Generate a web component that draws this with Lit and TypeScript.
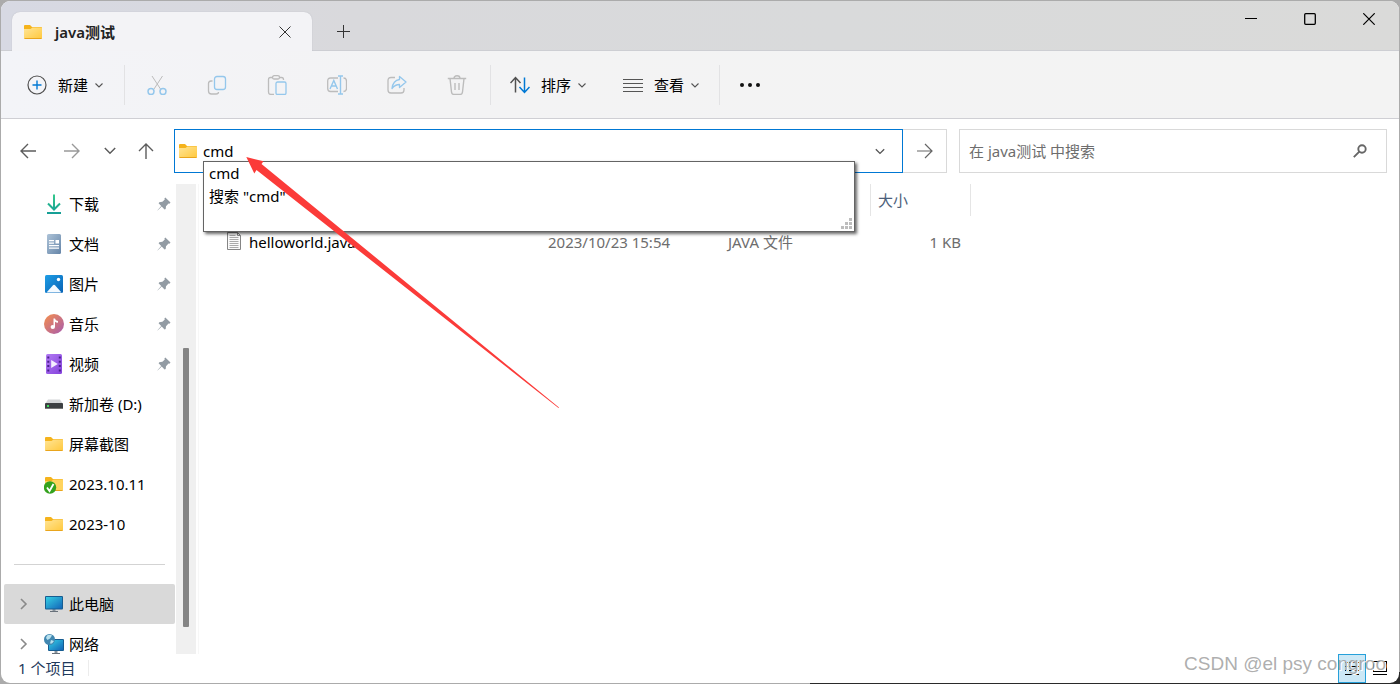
import { LitElement, html, css, svg, nothing } from "lit";
import { customElement, state } from "lit/decorators.js";

const chevronDown = html`<svg class="chev" width="10" height="10" viewBox="0 0 10 10" fill="none" stroke="#555" stroke-width="1.100"><path d="M1.500 3.500 5 7 8.500 3.500" /></svg>`;

const folder = html`<svg width="20" height="20" viewBox="0 0 20 20">
  <defs><linearGradient id="fd" x1="0" y1="0" x2="1" y2="1"><stop offset="0" stop-color="#ffe597" /><stop offset="1" stop-color="#ffc83c" /></linearGradient></defs>
  <path d="M1 4a1 1 0 0 1 1-1h5l2 2h9a1 1 0 0 1 1 1v6H1z" fill="#f5b31c" />
  <path d="M1 7h6.500l2-1.500H18a1 1 0 0 1 1 1V16a1 1 0 0 1-1 1H2a1 1 0 0 1-1-1z" fill="url(#fd)" />
  <path d="M1.500 16.500h17" stroke="#e9a51d" />
</svg>`;

const icons: Record<string, unknown> = {
  folder,
  download: html`<svg width="20" height="20" viewBox="0 0 20 20" fill="none" stroke-width="2">
    <defs><linearGradient id="dl" gradientUnits="userSpaceOnUse" x1="0" y1="0" x2="0" y2="20"><stop offset="0" stop-color="#35c98b" /><stop offset="1" stop-color="#149d96" /></linearGradient></defs>
    <path d="M10 .5V15M4 9.500l6 6 6-6M3 19h14.010" stroke="url(#dl)" />
  </svg>`,
  document: html`<svg width="20" height="20" viewBox="0 0 20 20">
    <defs><linearGradient id="dc" x1="0" y1="0" x2="1" y2="1"><stop offset="0" stop-color="#adc3d8" /><stop offset="1" stop-color="#6585a8" /></linearGradient></defs>
    <rect x="3" width="14" height="20" rx="1.500" fill="url(#dc)" />
    <path d="M5 6.700h5M5 9.200h5M5 11.700h10M5 14.200h10" stroke="#fff" stroke-width="1.300" /><rect x="11.500" y="6" width="3.500" height="3.500" fill="#fff" />
  </svg>`,
  picture: html`<svg width="20" height="20" viewBox="0 0 20 20">
    <defs><linearGradient id="pc" x1="0" y1="0" x2="1" y2="1"><stop offset="0" stop-color="#1e9ee6" /><stop offset="1" stop-color="#0862b5" /></linearGradient></defs>
    <rect x="1" y="1" width="18" height="18" rx="1.500" fill="url(#pc)" />
    <path d="M2.500 18.500 8.800 11.500q1.200-1.300 2.400 0l6.300 7z" fill="#f4faff" /><circle cx="14.500" cy="5.500" r="1.700" fill="#fff" />
  </svg>`,
  music: html`<svg width="20" height="20" viewBox="0 0 20 20">
    <defs><linearGradient id="ms" x1="0" y1="0" x2="1" y2="1"><stop offset=".1" stop-color="#ee8a55" /><stop offset="1" stop-color="#a75baf" /></linearGradient></defs>
    <circle cx="10" cy="10" r="10" fill="url(#ms)" />
    <ellipse cx="8.800" cy="13" rx="2.200" ry="2" fill="#fff" /><path d="M9.500 13V4.500h1.500q.3 2.200 3 2.500v1.800q-2 0-3-1V13z" fill="#fff" />
  </svg>`,
  video: html`<svg width="20" height="20" viewBox="0 0 20 20">
    <defs><linearGradient id="vd" x1="0" y1="0" x2="1" y2="1"><stop offset="0" stop-color="#b27bf3" /><stop offset="1" stop-color="#8542dc" /></linearGradient></defs>
    <rect x="2" width="16" height="20" rx="1.500" fill="url(#vd)" />
    <path d="M4.300 2.500V19M15.800 2.500V19" stroke="#4a1f8c" stroke-width="2" stroke-dasharray="2 2.300" />
    <path d="M7.200 6v8l6.600-4z" fill="#f5efff" />
  </svg>`,
  drive: html`<svg width="20" height="20" viewBox="0 0 20 20">
    <path d="M4 5.500h12L19 10H1z" fill="#d4d6d8" /><rect x="1" y="9" width="18" height="6" rx="1" fill="#3d4043" /><path d="M1.500 14.500h17" stroke="#777" /><rect x="3" y="11" width="2" height="2" fill="#3fdc5c" />
  </svg>`,
  synced: html`<svg width="20" height="20" viewBox="0 0 20 20">
    <path d="M1 4a1 1 0 0 1 1-1h5l2 2h9a1 1 0 0 1 1 1v6H1z" fill="#f5b31c" />
    <path d="M1 7h6.500l2-1.500H18a1 1 0 0 1 1 1V16a1 1 0 0 1-1 1H2a1 1 0 0 1-1-1z" fill="#ffd45e" /><path d="M9 16.500h9.500" stroke="#e9a51d" />
    <circle cx="6" cy="13.500" r="6.200" fill="#34a21e" /><path d="M3 13.500l2.500 3.500L9.500 10" stroke="#fff" stroke-width="1.800" fill="none" />
  </svg>`,
  computer: html`<svg width="20" height="20" viewBox="0 0 20 20">
    <defs><linearGradient id="cp" x1="0" y1="0" x2="1" y2="1"><stop offset="0" stop-color="#35cfe4" /><stop offset="1" stop-color="#1265b8" /></linearGradient></defs>
    <path d="M8.500 15h3v2h-3z" fill="#8b949c" /><path d="M6 17.500h8" stroke="#68717a" /><rect x="1" y="2" width="18" height="13.500" rx="1" fill="#175d91" /><rect x="2" y="3" width="16" height="11.500" fill="url(#cp)" />
  </svg>`,
  network: html`<svg width="20" height="20" viewBox="0 0 20 20">
    <defs><linearGradient id="nt" x1="0" y1="0" x2="1" y2="1"><stop offset="0" stop-color="#35cfe4" /><stop offset="1" stop-color="#1265b8" /></linearGradient></defs>
    <path d="M10.500 16h3v3h-3z" fill="#8b949c" /><path d="M8 19.500h8" stroke="#68717a" /><rect x="4" y="5" width="16" height="12" rx="1" fill="#175d91" /><rect x="5" y="6" width="14" height="10" fill="url(#nt)" />
    <circle cx="5.500" cy="5.500" r="5.500" fill="#4187b0" /><path d="M3 1.500q3-1.500 5 0L6 4.500 3.500 6 2 4zM7 6l3 1-2 2.500H6z" fill="#b8e1ee" />
  </svg>`,
};

const pin = html`<svg class="pin" width="14" height="14" viewBox="0 0 14 14"><path d="M8.300.5 13.500 5.600 12.400 6.700 11.500 6.500 9 9.200 8.700 12 7.500 12.500 4.700 9.600.6 13.500.5 13.300 4.200 9 1.600 6.300 2.300 5.200 5.400 4.800 7.800 2.400 7.400 1.500z" fill="#929ba3" /></svg>`;

const tools = [
  { label: "剪切", art: svg`<path d="M5 1l8.500 13M15.500 1 7 14" stroke="#bcbcbc"/><g stroke="#94c7ec" stroke-width="1.500"><circle cx="4" cy="16.500" r="3"/><circle cx="16" cy="16.500" r="3"/></g>` },
  { label: "复制", art: svg`<path d="M5.500 6H4Q1.500 6 1.500 8.500V16q0 3 3 3H9q2.500 0 2.500-2" stroke="#bcbcbc" stroke-width="1.300"/><rect x="7.500" y="1.500" width="11" height="13" rx="2.500" stroke="#94c7ec" stroke-width="1.300"/>` },
  { label: "粘贴", art: svg`<path d="M5.500 2.500h-2Q1.500 2.500 1.500 4.500V17q0 2.500 2.500 2.500h3M12.500 2.500h2q2 0 2 2V5" stroke="#bcbcbc" stroke-width="1.300"/><rect x="5.500" y=".7" width="7" height="3.300" rx="1.600" stroke="#bcbcbc" stroke-width="1.300"/><rect x="9" y="7" width="10" height="12.500" rx="1.500" stroke="#94c7ec" stroke-width="1.300"/>` },
  { label: "重命名", art: svg`<path d="M11 3H3.500Q.7 3 .7 6v7.500q0 3 2.800 3H11M16.500 3Q19.500 3 19.500 6v7.500q0 3-3 3" stroke="#bcbcbc" stroke-width="1.300"/><path d="M3 14 6.800 5.500 10.500 14M4.500 11h4.700M13.500 1.500V18.500M11 1h5M11 19h5" stroke="#94c7ec" stroke-width="1.400"/>` },
  { label: "共享", art: svg`<path d="M8 2.500H4q-3 0-3 3V15q0 3 3 3h10q3 0 3-3v-2" stroke="#bcbcbc" stroke-width="1.300"/><path d="M12.500 1.500 19 7l-6.500 5.500V9.500Q8 9.500 5 13.500 6 5.500 12.500 4.500z" stroke="#94c7ec" stroke-width="1.300" stroke-linejoin="round"/>` },
  { label: "删除", art: svg`<g stroke="#bcbcbc" stroke-width="1.400"><path d="M.8 3.500h18.400M3 3.500 4.500 17q.3 2.500 2.500 2.500h6q2.200 0 2.500-2.500L17 3.500M7 3.500Q7 .8 10 .8T13 3.500M8 8v7M12 8v7"/></g>` },
];

const quickAccess = [
  { icon: "download", name: "下载", pinned: true },
  { icon: "document", name: "文档", pinned: true },
  { icon: "picture", name: "图片", pinned: true },
  { icon: "music", name: "音乐", pinned: true },
  { icon: "video", name: "视频", pinned: true },
  { icon: "drive", name: "新加卷 (D:)", pinned: false },
  { icon: "folder", name: "屏幕截图", pinned: false },
  { icon: "synced", name: "2023.10.11", pinned: false },
  { icon: "folder", name: "2023-10", pinned: false },
];

const places = [
  { icon: "computer", name: "此电脑" },
  { icon: "network", name: "网络" },
];

@customElement("app-root")
export class AppRoot extends LitElement {
  @state() private selected = "此电脑";

  static styles = css`
    :host {
      display: flex;
      position: relative;
      box-sizing: border-box;
      height: 100vh;
      padding: 1px;
      overflow: hidden;
      background: linear-gradient(90deg, #ababab 0 810px, #2a2a2a 810px) bottom / 100% 12px no-repeat, #ababab;
      font: 15px/20px "Noto Sans", "Noto Sans CJK SC", sans-serif;
      color: #000;
    }
    * { box-sizing: border-box; }
    svg { display: block; flex: none; }
    button, input { font: inherit; color: inherit; margin: 0; border: 0; padding: 0; background: none; outline: none; }
    button { display: flex; align-items: center; justify-content: center; flex: none; }
    .window { flex: 1; min-width: 0; display: flex; flex-direction: column; border-radius: 9px; overflow: hidden; background: #fff; }
    .titlebar { display: flex; height: 50px; flex: none; padding: 0 1px 0 11px; background: linear-gradient(90deg, #d7d9e3, #d9d9dc 25%, #d9dadb 60%, #dadad9); border-bottom: 1px solid #cdced3; }
    .tab { display: flex; align-items: center; align-self: flex-end; width: 300px; height: 39px; margin-bottom: -1px; padding: 0 15px 0 11px; border-radius: 8px 8px 0 0; background: #f3f3f6; box-shadow: 0 0 1px #aaacb4; clip-path: inset(-2px -2px 0 -2px); font-weight: 600; color: #222; }
    .tab-name { flex: 1; padding-left: 12px; }
    .tab button { width: 24px; height: 24px; }
    .add { width: 62px; padding-top: 12px; }
    .caption { display: flex; margin-left: auto; height: 36px; }
    .caption button { width: 59px; }
    .toolbar { display: flex; align-items: center; height: 68px; flex: none; padding-left: 16px; background: linear-gradient(90deg, #f3f4f8, #f3f3f4 30%, #f3f3f3); border-bottom: 1px solid #cfcfd4; }
    .tool { width: 60px; height: 40px; }
    .labelled { height: 40px; gap: 11px; padding: 0 10px; }
    .labelled .chev { margin-left: -5px; }
    .rule { width: 1px; height: 40px; background: #e2e2e4; }
    .first { margin-left: 10px; margin-right: 2px; }
    .mid { margin-left: 3px; margin-right: 9px; }
    .view { margin-left: 16px; }
    .last { margin-left: 9px; }
    .nav { display: grid; grid-template-columns: 165px minmax(0, 729fr) 44px minmax(0, 440fr); height: 65px; flex: none; padding: 10px 12px 11px 8px; }
    .arrows { display: flex; }
    .arrows button { width: 38px; }
    .arrows .wide { width: 50px; }
    .arrows .slim { width: 26px; }
    .arrows .up { width: 46px; }
    .address { position: relative; display: flex; align-items: center; padding-left: 3px; border: 1px solid #0078d4; }
    .address input { flex: 1; min-width: 0; height: 40px; padding-left: 5px; }
    .address > button { width: 44px; height: 40px; }
    .address > button svg { width: 12px; height: 12px; }
    .go { border: 1px solid #d9d9d9; border-left: 0; }
    .search { display: flex; align-items: center; margin-left: 12px; padding: 0 19px 0 9px; border: 1px solid #d9d9d9; }
    .search input { flex: 1; min-width: 0; }
    .search input::placeholder { color: #6d6d6d; opacity: 1; }
    .suggest { position: absolute; z-index: 2; left: 28px; right: 47px; top: 31px; height: 71px; margin: 0; padding: 0 5px; list-style: none; line-height: 23px; background: #fff; border: 1px solid #646464; box-shadow: 2px 2px 3px #0009; }
    .grip { position: absolute; right: 2px; bottom: 2px; }
    .body { display: flex; flex: 1; min-height: 0; }
    .side { width: 174px; flex: none; overflow: hidden; padding-left: 3px; }
    .row { display: flex; align-items: center; justify-content: flex-start; width: 100%; height: 40px; padding-right: 4px; border-radius: 2px; text-align: left; }
    .row.on { background: #d9d9d9; }
    .twist { width: 40px; display: flex; justify-content: center; }
    .row-name { flex: 1; padding-left: 5px; white-space: nowrap; }
    .split { height: 1px; margin: 20px 10px 19px; background: #d3d3d3; }
    .scroll { width: 21px; flex: none; padding: 164px 7px 27px 8px; background: linear-gradient(90deg, #fff 1px, #f0f0f0 1px); }
    .thumb { height: 100%; border-radius: 1px; background: #858585; }
    .files { flex: 1; min-width: 0; margin-left: 2px; padding-left: 23px; border-left: 1px solid #f7f7f7; }
    table { border-collapse: separate; border-spacing: 0; table-layout: fixed; width: 749px; color: #6d6d6d; }
    th { height: 32px; padding: 0 7px; border-right: 1px solid #e5e5e5; text-align: left; font-weight: 400; color: #4c607a; }
    tbody::before { content: ""; display: block; height: 11px; }
    td { height: 30px; padding: 0 7px; white-space: nowrap; }
    .c-name { width: 319px; }
    .c-date { width: 180px; }
    .c-type { width: 150px; }
    .c-size { width: 100px; }
    .file { display: flex; align-items: center; gap: 6px; margin-left: -4px; color: #000; }
    .num { text-align: right; padding-right: 10px; }
    .status { display: flex; align-items: flex-start; height: 29px; flex: none; padding: 0 5px 0 17px; color: #1e395b; }
    .count { margin-top: 6px; padding-right: 13px; border-right: 1px solid #ececec; line-height: 16px; }
    .modes { display: flex; margin-left: auto; height: 29px; }
    .modes button { width: 28px; border: 1px solid transparent; }
    .modes .on { border-color: #26a0da; background: #cce8f6; }
    .mark { position: absolute; z-index: 3; right: 14px; bottom: 8px; font: 19px/24px "Liberation Sans", sans-serif; color: #999c; text-shadow: 1px 1px 0 #fff; }
    .pointer { position: absolute; z-index: 4; left: 0; top: 0; pointer-events: none; }
  `;

  private row(icon: string, name: string, pinned: boolean, twisty: boolean) {
    return html`<button class="row ${name === this.selected ? "on" : ""}" @click=${() => (this.selected = name)}>
      <span class="twist">${twisty
        ? html`<svg width="10" height="12" viewBox="0 0 10 12" fill="none" stroke="#8a8a8a" stroke-width="1.600"><path d="M2 1l5 5-5 5" /></svg>`
        : nothing}</span>
      ${icons[icon]}<span class="row-name">${name}</span>${pinned ? pin : nothing}
    </button>`;
  }

  render() {
    return html`
      <div class="window">
        <header class="titlebar">
          <div class="tab">
            ${folder}<span class="tab-name">java测试</span>
            <button aria-label="关闭标签页"><svg width="12" height="12" viewBox="0 0 12 12" stroke="#333"><path d="M.5.5l11 11M11.500.5l-11 11" /></svg></button>
          </div>
          <button class="add" aria-label="新标签页"><svg width="13" height="13" viewBox="0 0 13 13" stroke="#333"><path d="M6.500 0v13M0 6.500h13" /></svg></button>
          <div class="caption">
            <button aria-label="最小化"><svg width="12" height="12" viewBox="0 0 12 12" stroke="#000"><path d="M0 5.500h12" /></svg></button>
            <button aria-label="最大化"><svg width="12" height="12" viewBox="0 0 12 12" stroke="#000" fill="none" stroke-width="1.300"><rect x=".7" y=".7" width="10.600" height="10.600" rx="1" /></svg></button>
            <button aria-label="关闭"><svg width="12" height="12" viewBox="0 0 12 12" stroke="#000" stroke-width="1.200"><path d="M.3.3l11.400 11.400M11.700.3.3 11.700" /></svg></button>
          </div>
        </header>

        <div class="toolbar">
          <button class="labelled">
            <svg width="20" height="20" viewBox="0 0 20 20" fill="none"><circle cx="10" cy="10" r="9" stroke="#505050" stroke-width="1.200" /><path d="M10 5.500v9M5.500 10h9" stroke="#0078d4" stroke-width="1.400" /></svg>
            <span>新建</span>${chevronDown}
          </button>
          <span class="rule first"></span>
          ${tools.map((t) => html`<button class="tool" aria-label=${t.label}><svg width="20" height="20" viewBox="0 0 20 20" fill="none">${t.art}</svg></button>`)}
          <span class="rule mid"></span>
          <button class="labelled">
            <svg width="20" height="20" viewBox="0 0 20 20" fill="none" stroke-width="1.500"><path d="M5.500 17.500V2.500M.5 8l5-5.500 5 5.500" stroke="#505050" /><path d="M14.500 2.500V17M9.500 12l5 5.500 5-5.500" stroke="#0078d4" /></svg>
            <span>排序</span>${chevronDown}
          </button>
          <button class="labelled view">
            <svg width="20" height="20" viewBox="0 0 20 20" stroke="#555"><path d="M0 4.500h20M0 8.500h20M0 12.500h20M0 16.500h20" /></svg>
            <span>查看</span>${chevronDown}
          </button>
          <span class="rule last"></span>
          <button class="tool" aria-label="更多"><svg width="20" height="20" viewBox="0 0 20 20" fill="#111"><circle cx="2" cy="10" r="2" /><circle cx="10" cy="10" r="2" /><circle cx="18" cy="10" r="2" /></svg></button>
        </div>

        <div class="nav">
          <div class="arrows">
            <button aria-label="后退"><svg width="16" height="16" viewBox="0 0 16 16" fill="none" stroke="#5c5c5c" stroke-width="1.400"><path d="M16 8H1M8 1 1 8l7 7" /></svg></button>
            <button class="wide" aria-label="前进"><svg width="16" height="16" viewBox="0 0 16 16" fill="none" stroke="#999" stroke-width="1.400"><path d="M0 8h15M8 1l7 7-7 7" /></svg></button>
            <button class="slim" aria-label="最近位置"><svg width="12" height="12" viewBox="0 0 12 12" fill="none" stroke="#5c5c5c" stroke-width="1.500"><path d="M.8 3 6 8.200 11.200 3" /></svg></button>
            <button class="up" aria-label="上移"><svg width="16" height="16" viewBox="0 0 16 16" fill="none" stroke="#5c5c5c" stroke-width="1.400"><path d="M8 16V1M1 8l7-7 7 7" /></svg></button>
          </div>
          <div class="address">
            ${folder}<input aria-label="地址" .value=${"cmd"} />
            <button aria-label="历史记录">${chevronDown}</button>
            <ul class="suggest">
              <li>cmd</li>
              <li>搜索 "cmd"</li>
              <svg class="grip" width="11" height="11" viewBox="0 0 11 11" fill="#bdbdbd"><path d="M8 0h3v3H8zM4 4h3v3H4zM8 4h3v3H8zM0 8h3v3H0zM4 8h3v3H4zM8 8h3v3H8z" /></svg>
            </ul>
          </div>
          <button class="go" aria-label="转到"><svg width="16" height="16" viewBox="0 0 16 16" fill="none" stroke="#666" stroke-width="1.200"><path d="M0 8h15M8 1l7 7-7 7" /></svg></button>
          <div class="search">
            <input aria-label="搜索" placeholder="在 java测试 中搜索" />
            <svg width="14" height="14" viewBox="0 0 14 14" fill="none" stroke="#666"><circle cx="9" cy="5" r="3.700" stroke-width="1.900" /><path d="M6.300 7.700.8 13.200" stroke-width="1.900" /></svg>
          </div>
        </div>

        <div class="body">
          <nav class="side">
            ${quickAccess.map((q) => this.row(q.icon, q.name, q.pinned, false))}
            <div class="split"></div>
            ${places.map((p) => this.row(p.icon, p.name, false, true))}
          </nav>
          <div class="scroll"><div class="thumb"></div></div>
          <main class="files">
            <table>
              <colgroup><col class="c-name" /><col class="c-date" /><col class="c-type" /><col class="c-size" /></colgroup>
              <thead><tr><th></th><th></th><th></th><th>大小</th></tr></thead>
              <tbody>
                <tr>
                  <td><span class="file"><svg width="18" height="20" viewBox="0 0 18 20"><path d="M2.500.5h10l3 3v14h-13z" fill="#fafafa" stroke="#858585" /><path d="M12.500.5v3h3" fill="none" stroke="#858585" /><path d="M4.500 3.500h6M4.500 5.500h9M4.500 7.500h9M4.500 9.500h9M4.500 11.500h9M4.500 13.500h9M4.500 15.500h9" stroke="#aaa" /></svg>helloworld.java</span></td>
                  <td>2023/10/23 15:54</td>
                  <td>JAVA 文件</td>
                  <td class="num">1 KB</td>
                </tr>
              </tbody>
            </table>
          </main>
        </div>

        <footer class="status">
          <span class="count">1 个项目</span>
          <div class="modes">
            <button class="on" aria-label="详细信息"><svg width="16" height="16" viewBox="0 0 16 16" stroke="#000"><path d="M1 1.500h3M5 1.500h10M1 5.500h3M5 5.500h10M1 9.500h3M5 9.500h10M1 13.500h14" /></svg></button>
            <button aria-label="大图标"><svg width="16" height="16" viewBox="0 0 16 16" fill="none" stroke="#000"><rect x="1.500" y=".5" width="13" height="10" /><path d="M1 13.500h14" /></svg></button>
          </div>
        </footer>
      </div>
      <div class="mark">CSDN @el psy congroo</div>
      <svg class="pointer" width="560" height="410" viewBox="0 0 560 410"><path d="M246.300 157 263.500 161.300 261.500 164 559 407.500 558.500 408 256.500 170 254.300 173.500z" fill="#fb3b39" /></svg>
    `;
  }
}
